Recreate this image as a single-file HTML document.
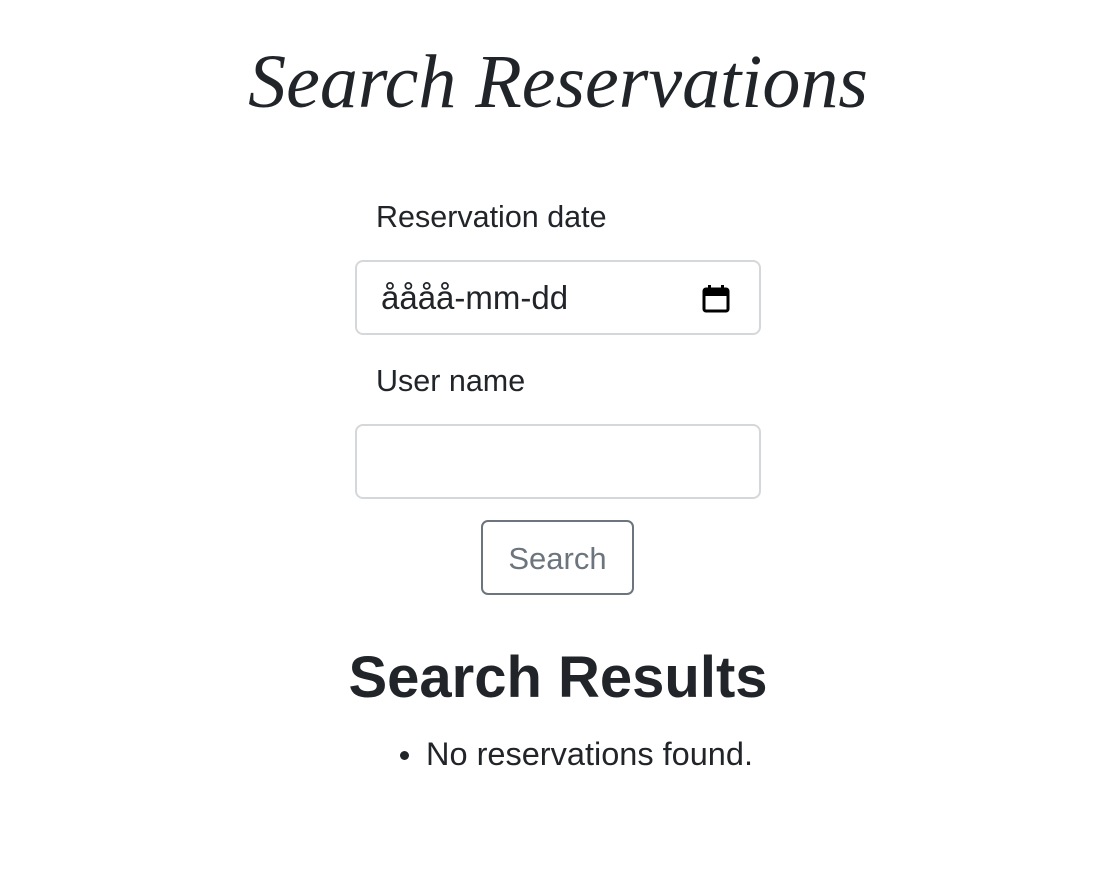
<!DOCTYPE html>
<html><head><meta charset="utf-8"><style>
body{margin:0;width:1094px;height:870px;background:#fff;color:#212529;font-family:"Liberation Sans",sans-serif;position:relative;overflow:hidden}
.a{position:absolute;white-space:nowrap}
h1{position:absolute;left:0;width:1116px;text-align:center;top:32px;margin:0;font-family:"Liberation Serif",serif;font-style:italic;font-weight:normal;font-size:76px;line-height:100px}
.lbl{font-size:30.5px;left:376px}
.inp{position:absolute;left:355px;width:402px;height:71px;border:2px solid #d5d8db;border-radius:8px;box-sizing:content-box}
.btn{position:absolute;left:481px;top:520px;width:149px;height:71px;border:2px solid #6c757d;border-radius:7px;color:#6c757d;font-size:31px;line-height:73px;text-align:center}
h2{position:absolute;left:0;width:1116px;text-align:center;top:642px;margin:0;font-size:58px;font-weight:bold;line-height:72px}
</style></head><body>
<h1>Search Reservations</h1>
<div class="a lbl" style="top:199px;line-height:36px">Reservation date</div>
<div class="inp" style="top:260px"><span class="a" style="left:24px;top:18px;font-size:33px;line-height:36px;color:#212529">åååå-mm-dd</span>
<svg class="a" style="left:345px;top:22px" width="28" height="30" viewBox="0 0 28 30"><rect x="2" y="5" width="24" height="22" rx="2" fill="none" stroke="#000" stroke-width="3"/><rect x="2" y="5" width="24" height="7" fill="#000"/><rect x="6" y="1" width="3" height="6" fill="#000"/><rect x="19" y="1" width="3" height="6" fill="#000"/></svg></div>
<div class="a lbl" style="top:363px;line-height:36px">User name</div>
<div class="inp" style="top:424px"></div>
<div class="btn">Search</div>
<h2>Search Results</h2>
<div class="a" style="left:400px;top:751px;width:9px;height:9px;border-radius:50%;background:#212529"></div>
<div class="a" style="left:426px;top:736px;font-size:32.5px;line-height:36px">No reservations found.</div>
</body></html>
